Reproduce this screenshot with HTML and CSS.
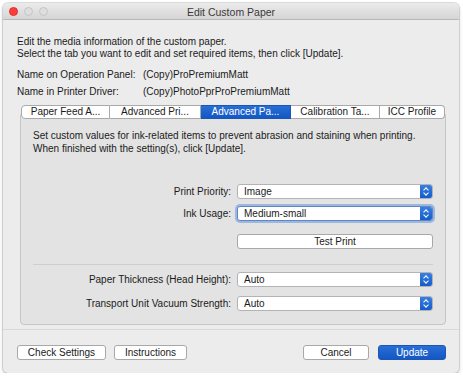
FILE: index.html
```html
<!DOCTYPE html>
<html lang="en">
<head>
  <meta charset="UTF-8">
  <title>Edit Custom Paper</title>
  <link rel="stylesheet" href="styles.css">
</head>
<body>
  <div class="window">
    <div class="titlebar">
      <div class="lights">
        <span class="light red"></span>
        <span class="light"></span>
        <span class="light"></span>
      </div>
      <div class="title">Edit Custom Paper</div>
      <div></div>
    </div>

    <div class="content">
      <p class="intro">Edit the media information of the custom paper.<br>Select the tab you want to edit and set required items, then click [Update].</p>

      <div class="names">
        <span>Name on Operation Panel:</span><span>(Copy)ProPremiumMatt</span>
        <span>Name in Printer Driver:</span><span>(Copy)PhotoPprProPremiumMatt</span>
      </div>

      <div class="tabs">
        <button class="tab">Paper Feed A...</button>
        <button class="tab">Advanced Pri...</button>
        <button class="tab active">Advanced Pa...</button>
        <button class="tab">Calibration Ta...</button>
        <button class="tab">ICC Profile</button>
      </div>

      <div class="panel">
        <p class="panel-text">Set custom values for ink-related items to prevent abrasion and staining when printing.<br>When finished with the setting(s), click [Update].</p>

        <div class="form top-form">
          <label>Print Priority:</label>
          <div class="popup"><span>Image</span><i class="arrows"></i></div>
          <label>Ink Usage:</label>
          <div class="popup focused"><span>Medium-small</span><i class="arrows"></i></div>
          <span></span>
          <button class="btn wide">Test Print</button>
        </div>

        <hr class="sep">

        <div class="form bottom-form">
          <label>Paper Thickness (Head Height):</label>
          <div class="popup"><span>Auto</span><i class="arrows"></i></div>
          <label>Transport Unit Vacuum Strength:</label>
          <div class="popup"><span>Auto</span><i class="arrows"></i></div>
        </div>
      </div>
    </div>

    <div class="footer">
      <button class="btn check">Check Settings</button>
      <button class="btn instr">Instructions</button>
      <span class="spacer"></span>
      <button class="btn cancel">Cancel</button>
      <button class="btn primary">Update</button>
    </div>
  </div>
</body>
</html>
```

FILE: styles.css
```css
html, body {
  margin: 0;
  padding: 0;
  background: #ffffff;
  font-family: "Liberation Sans", Arial, sans-serif;
  font-size: 10px;
  color: #1a1a1a;
}

.window {
  width: 456px;
  height: 370px;
  margin: 3px 0 0 3px;
  background: #ececec;
  border-radius: 5px;
  box-shadow: 0 0 0 1px rgba(0, 0, 0, 0.12), 0 2px 4px rgba(0, 0, 0, 0.18);
  display: flex;
  flex-direction: column;
  overflow: hidden;
}

.titlebar {
  height: 16px;
  flex: 0 0 auto;
  background: linear-gradient(#ebebeb, #d5d5d5);
  border-bottom: 1px solid #b9b9b9;
  display: grid;
  grid-template-columns: 1fr auto 1fr;
  align-items: center;
}

.lights {
  display: flex;
  gap: 6px;
  padding-left: 6px;
  padding-top: 1px;
}

.light {
  width: 7px;
  height: 7px;
  border-radius: 50%;
  background: #dedede;
  border: 1px solid #c4c4c4;
}

.light.red {
  background: #fc3d39;
  border-color: #e2312d;
}

.title {
  font-size: 10.5px;
  color: #3a3a3a;
  padding-top: 1px;
}

.content {
  padding: 16px 13px 0 14px;
}

.intro {
  margin: 0;
  line-height: 12px;
}

.names {
  display: grid;
  grid-template-columns: 126px auto;
  row-gap: 5px;
  margin-top: 9px;
  line-height: 12px;
}

.tabs {
  display: flex;
  margin: 7px 0 0 4px;
  position: relative;
  z-index: 1;
}

.tab {
  font: inherit;
  height: 14px;
  padding: 0;
  background: #ffffff;
  border: 1px solid #a9a9a9;
  border-left: none;
  color: #1a1a1a;
  line-height: 12px;
}

.tab:nth-child(1) { width: 89px; border-left: 1px solid #a9a9a9; border-radius: 4px 0 0 4px; }
.tab:nth-child(2) { width: 91px; }
.tab:nth-child(3) { width: 90px; }
.tab:nth-child(4) { width: 89px; }
.tab:nth-child(5) { width: 65px; border-radius: 0 4px 4px 0; }

.tab.active {
  background: linear-gradient(#2a6fd6, #1257c3);
  border-color: #1a56b6;
  color: #ffffff;
}

.panel {
  margin: -7px 0 0 3px;
  width: 426px;
  background: #e3e3e3;
  border: 1px solid #c6c6c6;
  border-radius: 4px;
  box-sizing: border-box;
  padding: 16px 12px 13px 12px;
}

.panel-text {
  margin: 0;
  line-height: 13px;
}

.form {
  display: grid;
  grid-template-columns: 1fr 196px;
  column-gap: 6px;
  row-gap: 7px;
  align-items: center;
}

.top-form {
  margin-top: 29px;
}

.bottom-form {
  row-gap: 9px;
}

.top-form .wide {
  margin-top: 6px;
}

.form label {
  text-align: right;
}

.popup {
  height: 15px;
  box-sizing: border-box;
  background: #ffffff;
  border: 1px solid #b3b3b3;
  border-radius: 3px;
  display: flex;
  align-items: center;
  overflow: hidden;
}

.popup span {
  flex: 1;
  padding-left: 6px;
  line-height: 13px;
}

.popup.focused {
  box-shadow: 0 0 0 2px rgba(90, 140, 220, 0.5);
  border-color: #5f86c4;
}

.arrows {
  width: 12px;
  align-self: stretch;
  background: linear-gradient(#3a7fe0, #145cc8);
  position: relative;
}

.arrows::before,
.arrows::after {
  content: "";
  position: absolute;
  left: 4px;
  width: 3px;
  height: 3px;
  border-left: 1px solid #ffffff;
  border-top: 1px solid #ffffff;
}

.arrows::before {
  top: 3px;
  transform: rotate(45deg);
}

.arrows::after {
  bottom: 3px;
  transform: rotate(225deg);
}

.btn {
  font: inherit;
  height: 15px;
  padding: 0;
  background: #ffffff;
  border: 1px solid #a8a8a8;
  border-radius: 3px;
  color: #1a1a1a;
  line-height: 13px;
}

.btn.wide {
  width: 196px;
}

.sep {
  margin: 15px 0 7px 0;
  border: none;
  border-top: 1px solid #cfcfcf;
}

.footer {
  margin-top: auto;
  border-top: 1px solid #d9d9d9;
  padding: 15px 13px 13px 14px;
  display: flex;
  gap: 8px;
  align-items: center;
}

.spacer {
  flex: 1;
}

.btn.check {
  width: 89px;
}

.btn.instr {
  width: 73px;
}

.btn.cancel {
  width: 66px;
  margin-right: 1px;
}

.btn.primary {
  width: 68px;
  background: linear-gradient(#2a6fd6, #1257c3);
  border-color: #1a56b6;
  color: #ffffff;
}
```
